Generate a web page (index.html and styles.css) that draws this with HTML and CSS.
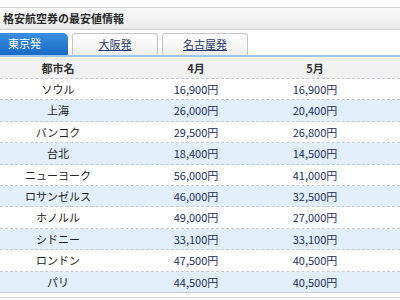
FILE: index.html
```html
<!DOCTYPE html>
<html lang="ja">
<head>
<meta charset="utf-8">
<link rel="stylesheet" href="styles.css">
</head>
<body>
<div class="panel">
  <div class="title">格安航空券の最安値情報</div>
  <div class="tabs">
    <div class="tab active">東京発</div>
    <div class="tab"><a href="#">大阪発</a></div>
    <div class="tab"><a href="#">名古屋発</a></div>
  </div>
  <div class="table">
    <div class="row head"><div>都市名</div><div>4月</div><div>5月</div><div></div></div>
    <div class="row"><div class="city">ソウル</div><div class="num">16,900円</div><div class="num">16,900円</div><div></div></div>
    <div class="row alt"><div class="city">上海</div><div class="num">26,000円</div><div class="num">20,400円</div><div></div></div>
    <div class="row"><div class="city">バンコク</div><div class="num">29,500円</div><div class="num">26,800円</div><div></div></div>
    <div class="row alt"><div class="city">台北</div><div class="num">18,400円</div><div class="num">14,500円</div><div></div></div>
    <div class="row"><div class="city">ニューヨーク</div><div class="num">56,000円</div><div class="num">41,000円</div><div></div></div>
    <div class="row alt"><div class="city">ロサンゼルス</div><div class="num">46,000円</div><div class="num">32,500円</div><div></div></div>
    <div class="row"><div class="city">ホノルル</div><div class="num">49,000円</div><div class="num">27,000円</div><div></div></div>
    <div class="row alt"><div class="city">シドニー</div><div class="num">33,100円</div><div class="num">33,100円</div><div></div></div>
    <div class="row"><div class="city">ロンドン</div><div class="num">47,500円</div><div class="num">40,500円</div><div></div></div>
    <div class="row alt last"><div class="city">パリ</div><div class="num">44,500円</div><div class="num">40,500円</div><div></div></div>
  </div>
  <div class="next"></div>
</div>
</body>
</html>
```

FILE: styles.css
```css
html, body {
  margin: 0;
  padding: 0;
  background: #ffffff;
}
body {
  padding-top: 7px;
  font-family: "Noto Sans CJK JP", "Noto Sans", sans-serif;
  font-size: 11px;
  color: #222222;
}
.panel {
  width: 400px;
}
.title {
  height: 21px;
  line-height: 21px;
  border-top: 1px solid #d4d4d4;
  border-bottom: 1px solid #d2d2d2;
  background: linear-gradient(#fbfbfb, #e9e9e9);
  padding-left: 3px;
  font-weight: bold;
  color: #2a2a2a;
}
.tabs {
  display: flex;
  gap: 4px;
  margin-top: 3px;
  height: 22px;
  align-items: flex-end;
}
.tab {
  box-sizing: border-box;
  width: 86px;
  height: 22px;
  line-height: 21px;
  text-align: center;
  border: 1px solid #c4c4c4;
  border-bottom: none;
  border-radius: 4px 4px 0 0;
  background: linear-gradient(#ffffff, #eeeeee);
}
.tab a {
  color: #263a73;
  text-decoration: underline;
}
.tab.active {
  width: 68px;
  text-align: left;
  padding-left: 8px;
  border: none;
  border-radius: 0 5px 0 0;
  background: linear-gradient(#3b8ee0, #1a6ac6);
  color: #ffffff;
}
.table {
  border-top: 2px solid #9fc6ec;
  box-shadow: inset 0 1px 0 #345a88;
}
.row {
  display: grid;
  grid-template-columns: 116px 160px 78px 1fr;
  height: 20.4px;
  line-height: 20.4px;
  border-bottom: 1px dashed #c3c9d1;
}
.row > div {
  text-align: center;
}
.row.head {
  height: 20px;
  line-height: 20px;
  padding-top: 1px;
  background: #f1f1f1;
  font-weight: bold;
  color: #333333;
}
.row.alt {
  background: #e3eefb;
}
.row.last {
  border-bottom: 1px solid #c8ccd2;
}
.num {
  color: #1d2f5e;
}
.next {
  margin-top: 4px;
  border-top: 1px solid #d4d4d4;
  height: 4px;
}
```
